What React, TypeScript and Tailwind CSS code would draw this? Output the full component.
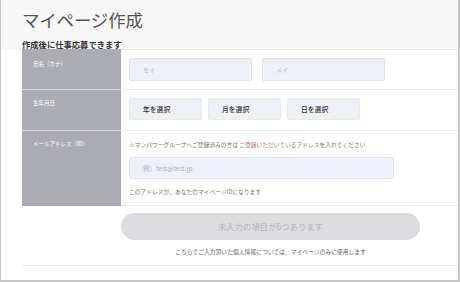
import React from "react";

export default function App() {
  const font = { fontFamily: '"Noto Sans CJK JP", "Noto Sans", sans-serif' };
  return (
    <div
      className="w-[460px] h-[282px] bg-white border-l border-r-2 border-b-2 border-[#c6c6c6] overflow-hidden box-border"
      style={font}
    >
      <div className="h-[49px] bg-[#f7f7f7] pl-[21px] flex flex-col">
        <div className="mt-[10px] text-[17.5px] leading-[19px] text-[#555] tracking-[-0.2px]">マイページ作成</div>
        <div className="mt-[10px] text-[8.3px] leading-[10px] font-bold text-[#333]">作成後に仕事応募できます</div>
      </div>

      <div className="ml-[21px] flex flex-col">
        {/* Row 1 */}
        <div className="flex h-[41px]">
          <div className="w-[99px] bg-[#abacb1] border-b border-[#d9d9dd] text-white text-[5.5px] leading-[7px] pl-[11px] pt-[12px]">
            氏名（カナ）
          </div>
          <div className="flex-1 border-t border-b border-[#ebebeb] pl-[8px] pt-[8px] flex gap-[10px]">
            <div className="w-[123px] h-[23px] rounded-[2px] bg-[#edf0f8] border border-[#dfe3ee] text-[6px] leading-[21px] pl-[13px] text-[#b4b7c0]">
              セイ
            </div>
            <div className="w-[123px] h-[23px] rounded-[2px] bg-[#edf0f8] border border-[#dfe3ee] text-[6px] leading-[21px] pl-[13px] text-[#b4b7c0]">
              メイ
            </div>
          </div>
        </div>

        {/* Row 2 */}
        <div className="flex h-[41px]">
          <div className="w-[99px] bg-[#abacb1] border-b border-[#d9d9dd] text-white text-[5.5px] leading-[7px] pl-[11px] pt-[10px]">
            生年月日
          </div>
          <div className="flex-1 border-b border-[#ebebeb] pl-[8px] pt-[8px] flex gap-[6px]">
            {["年を選択", "月を選択", "日を選択"].map((t) => (
              <div
                key={t}
                className="w-[73px] h-[22px] rounded-[2px] bg-[#edf0f8] border border-[#e6e9f1] text-[6.8px] leading-[20px] pl-[13px] text-[#333] font-medium"
              >
                {t}
              </div>
            ))}
          </div>
        </div>

        {/* Row 3 */}
        <div className="flex h-[75px]">
          <div className="w-[99px] bg-[#abacb1] text-white text-[5.5px] leading-[7px] pl-[11px] pt-[10px]">
            メールアドレス（ID）
          </div>
          <div className="flex-1 border-b border-[#ebebeb] pl-[8px] pt-[10px] flex flex-col">
            <div className="text-[5.75px] leading-[7px] text-[#777] whitespace-nowrap">
              ※マンパワーグループへご登録済みの方は <span className="text-[#c56a7c]">ご登録いただいているアドレス</span>を入れてください
            </div>
            <div className="mt-[9px] w-[265px] h-[22px] rounded-[2px] bg-[#edf0f8] border border-[#dfe3ee] text-[6.5px] leading-[20px] pl-[13px] text-[#b0b3bb]">
              例）test@test.jp
            </div>
            <div className="mt-[9px] text-[5.75px] leading-[7px] text-[#777] whitespace-nowrap">
              このアドレスが、あなたのマイページIDになります
            </div>
          </div>
        </div>

        {/* Button area */}
        <div className="border-b border-[#efefef] h-[60px] pl-[99px]">
          <div className="mt-[7px] w-[299px] flex flex-col items-center">
            <div className="w-[299px] h-[27px] rounded-full bg-[#dcdce0] text-[8.4px] leading-[27px] text-center text-[#b5b5ba]">
              未入力の項目が6つあります
            </div>
            <div className="mt-[8px] text-[5.8px] leading-[8px] text-[#666] whitespace-nowrap">
              こちらでご入力頂いた個人情報については、マイページのみに使用します
            </div>
          </div>
        </div>
      </div>
    </div>
  );
}
